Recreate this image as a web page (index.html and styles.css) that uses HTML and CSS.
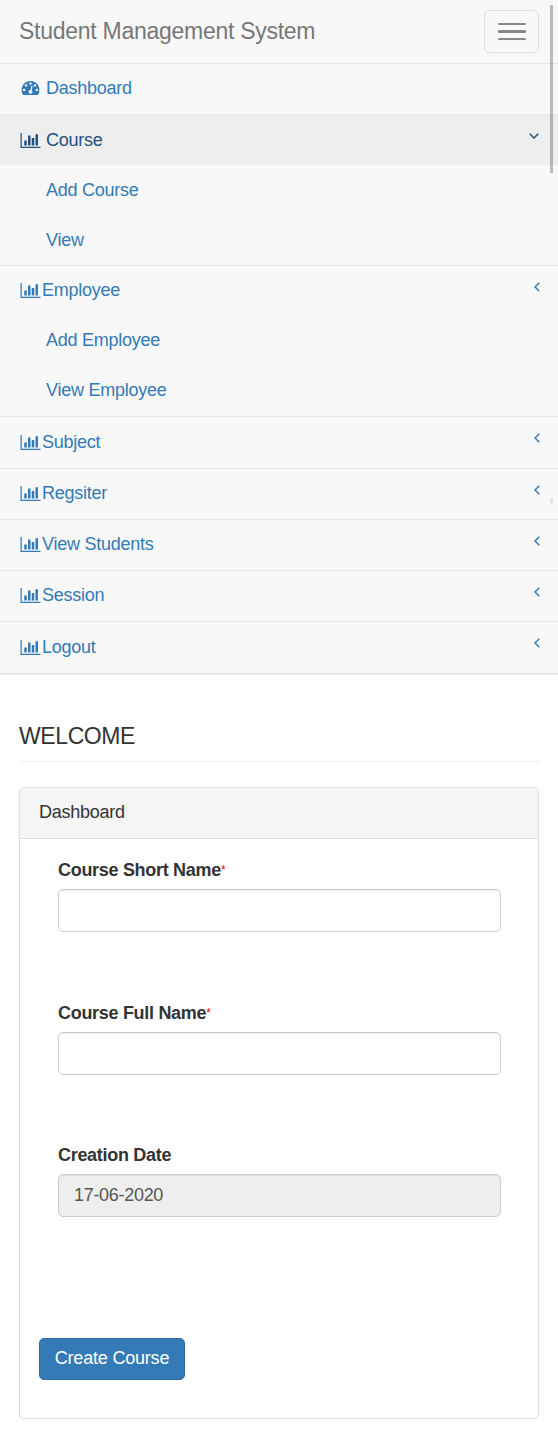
FILE: index.html
```html
<!DOCTYPE html>
<html lang="en">
<head>
<meta charset="utf-8">
<title>Student Management System</title>
<link rel="stylesheet" href="styles.css">
</head>
<body>
<svg class="defs" width="0" height="0">
  <symbol id="chart" viewBox="0 0 2048 1536"><path d="M640 768v512h-256v-512h256zM1024 256v1024h-256v-1024h256zM2048 1408v128h-2048v-1536h128v1408h1920zM1408 512v768h-256v-768h256zM1792 128v1152h-256v-1152h256z"/></symbol>
  <symbol id="left" viewBox="0 0 6 10"><path class="stroke" d="M5.3 .7L1 5l4.300 4.300"/></symbol>
  <symbol id="down" viewBox="0 0 10 6"><path class="stroke" d="M.7 .7L5 5l4.300-4.300"/></symbol>
</svg>
<nav class="navbar">
  <header class="bar">
    <a class="brand">Student Management System</a>
    <button class="toggle" aria-label="Menu"><i></i><i></i><i></i></button>
  </header>
  <ul class="menu">
    <li><a class="item spaced"><svg class="gauge" viewBox="0 256 1792 1408"><path d="M384 1152q0-53-37.5-90.5t-90.5-37.5-90.5 37.5-37.5 90.5 37.5 90.5 90.5 37.5 90.5-37.5 37.5-90.5zm192-448q0-53-37.5-90.5t-90.5-37.5-90.5 37.5-37.5 90.5 37.5 90.5 90.5 37.5 90.5-37.5 37.5-90.5zm428 481l101-382q6-26-7.500-48.500t-38.500-29.500-48 6.500-30 39.500l-101 382q-60 5-107 43.500t-63 98.500q-20 77 20 146t117 89 146-20 89-117q16-60-6-117t-72-91zm660-33q0-53-37.500-90.500t-90.500-37.500-90.500 37.500-37.500 90.500 37.500 90.500 90.500 37.500 90.500-37.500 37.500-90.500zm-640-640q0-53-37.500-90.500t-90.500-37.500-90.500 37.500-37.500 90.500 37.500 90.500 90.500 37.500 90.500-37.500 37.500-90.500zm448 192q0-53-37.500-90.500t-90.500-37.500-90.500 37.500-37.500 90.500 37.500 90.500 90.500 37.500 90.500-37.500 37.500-90.500zm320 448q0 261-141 483-19 29-54 29h-1402q-35 0-54-29-141-221-141-483 0-182 71-348t191-286 286-191 348-71 348 71 286 191 191 286 71 348z"/></svg><span>Dashboard</span></a></li>
    <li><a class="item spaced active"><svg class="chart"><use href="#chart"/></svg><span>Course</span><svg class="down"><use href="#down"/></svg></a>
      <ul class="sub"><li><a>Add Course</a></li><li><a>View</a></li></ul></li>
    <li><a class="item"><svg class="chart"><use href="#chart"/></svg><span>Employee</span><svg class="left"><use href="#left"/></svg></a>
      <ul class="sub compact"><li><a>Add Employee</a></li><li><a>View Employee</a></li></ul></li>
    <li><a class="item tall"><svg class="chart"><use href="#chart"/></svg><span>Subject</span><svg class="left"><use href="#left"/></svg></a></li>
    <li><a class="item"><svg class="chart"><use href="#chart"/></svg><span>Regsiter</span><svg class="left"><use href="#left"/></svg></a></li>
    <li><a class="item"><svg class="chart"><use href="#chart"/></svg><span>View Students</span><svg class="left"><use href="#left"/></svg></a></li>
    <li><a class="item"><svg class="chart"><use href="#chart"/></svg><span>Session</span><svg class="left"><use href="#left"/></svg></a></li>
    <li><a class="item tall"><svg class="chart"><use href="#chart"/></svg><span>Logout</span><svg class="left"><use href="#left"/></svg></a></li>
  </ul>
</nav>
<main class="page">
  <h1 class="title">WELCOME</h1>
  <section class="panel">
    <div class="panel-head">Dashboard</div>
    <form class="panel-body">
      <div class="field"><label class="label">Course Short Name<span class="required">*</span></label><input class="input" type="text"></div>
      <div class="field"><label class="label">Course Full Name<span class="required">*</span></label><input class="input" type="text"></div>
      <div class="field"><label class="label">Creation Date</label><input class="input readonly" type="text" value="17-06-2020" readonly></div>
      <button class="submit" type="button">Create Course</button>
    </form>
  </section>
</main>
<div class="scroll-thumb"></div>
<div class="scroll-mark"></div>
</body>
</html>
```

FILE: styles.css
```css
* { box-sizing: border-box; }
body {
  margin: 0;
  background: #fff;
  color: #333;
  font: 18px/26px "Liberation Sans", Arial, sans-serif;
  letter-spacing: -0.25px;
}
ul { list-style: none; margin: 0; padding: 0; }
svg { flex: none; fill: currentColor; }
.defs { position: absolute; }
.stroke { fill: none; stroke: currentColor; stroke-width: 1.5; }

.navbar { background: #f8f8f8; border-bottom: 1px solid #e7e7e7; }
.bar {
  display: flex;
  justify-content: space-between;
  align-items: center;
  height: 64px;
  padding: 0 19px;
  border-bottom: 1px solid #e7e7e7;
}
.brand { color: #777; font-size: 23px; letter-spacing: -0.27px; padding-bottom: 1px; }
.toggle {
  display: flex;
  flex-direction: column;
  align-items: center;
  justify-content: center;
  gap: 5px;
  width: 55px;
  height: 43px;
  padding: 0;
  border: 1px solid #ddd;
  border-radius: 5px;
  background: transparent;
}
.toggle i { width: 28px; height: 2px; border-radius: 1px; background: #888; }
.toggle i:nth-child(2) { height: 3px; }

.menu { color: #337ab7; }
.menu > li { border-bottom: 1px solid #e7e7e7; }
.item {
  display: flex;
  align-items: center;
  height: 50px;
  padding: 0 18px 2px 20px;
}
.item.tall { height: 51px; padding-bottom: 1px; }
.item.spaced span { margin-left: 5px; }
.item.active { background: #eee; color: #23527c; padding-bottom: 0; }
.item span { margin-left: 1px; }
.chart { width: 21px; height: 15px; }
.gauge { width: 19px; height: 14px; margin: 0 1px; }
.left { width: 6px; height: 10px; margin: -6px 0 0 auto; }
.tall .left { margin-top: -8px; }
.down { width: 10px; height: 6px; margin: -8px 1px 0 auto; }
.sub a { display: block; height: 50px; padding: 12px 0 0 46px; }
.compact a { padding-top: 11px; }

.page { padding: 0 19px; }
.title {
  height: 87px;
  margin: 0 0 25px;
  padding-top: 48px;
  border-bottom: 1px solid #eee;
  font-size: 23px;
  font-weight: 400;
  letter-spacing: -0.4px;
}
.panel {
  height: 632px;
  border: 1px solid #ddd;
  border-radius: 5px;
  box-shadow: 0 1px 1px rgba(0, 0, 0, .05);
}
.panel-head {
  height: 51px;
  padding: 11px 19px;
  background: #f5f5f5;
  border-bottom: 1px solid #ddd;
  border-radius: 4px 4px 0 0;
}
.panel-body { display: flex; flex-direction: column; align-items: flex-start; padding: 18px 19px; }
.field { width: 100%; height: 142.600px; padding: 0 18px 0 19px; }
.label { display: block; height: 32px; font-weight: 700; letter-spacing: -0.3px; white-space: nowrap; }
.required { position: relative; top: -2px; color: red; font-size: 12px; font-weight: 400; }
.input {
  display: block;
  width: 100%;
  height: 43px;
  padding: 0 15px;
  border: 1px solid #ccc;
  border-radius: 5px;
  background: #fff;
  color: #555;
  font: inherit;
  letter-spacing: -0.3px;
  box-shadow: inset 0 1px 1px rgba(0, 0, 0, .075);
}
.readonly { background: #eee; }
.submit {
  width: 146px;
  height: 42px;
  margin-top: 53px;
  padding: 0 0 2px;
  border: 1px solid #2e6da4;
  border-radius: 5px;
  background: #337ab7;
  color: #fff;
  font: inherit;
  letter-spacing: -0.2px;
}

.scroll-thumb { position: absolute; top: 5px; left: 550px; width: 3px; height: 168px; background: rgba(0, 0, 0, .25); }
.scroll-mark { position: absolute; top: 498px; left: 550px; width: 3px; height: 6px; background: #e3e3e3; }
```
